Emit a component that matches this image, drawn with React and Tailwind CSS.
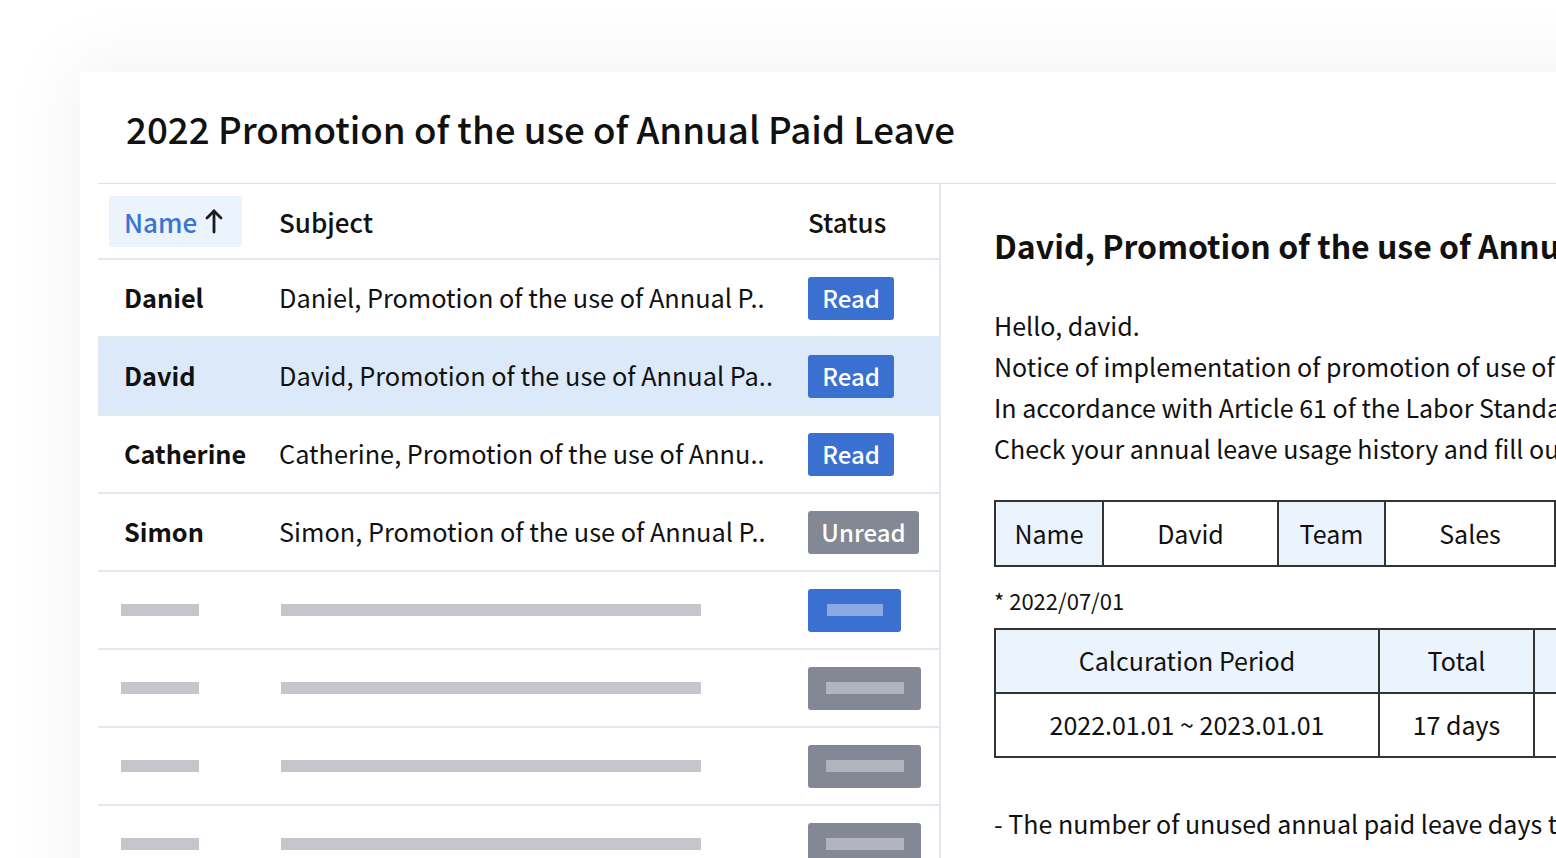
const rows = [
  { name: "Daniel", subject: "Daniel, Promotion of the use of Annual P..", status: "Read" },
  { name: "David", subject: "David, Promotion of the use of Annual Pa..", status: "Read", active: true },
  { name: "Catherine", subject: "Catherine, Promotion of the use of Annu..", status: "Read" },
  { name: "Simon", subject: "Simon, Promotion of the use of Annual P..", status: "Unread" },
];

const skeletons = ["blue", "gray", "gray", "gray"];

const Badge = ({ status }) =>
  status === "Read" ? (
    <span className="inline-flex h-[43px] w-[86px] items-center justify-center rounded-[3px] bg-[#3a70d0] text-[24px] font-medium text-white">
      Read
    </span>
  ) : (
    <span className="inline-flex h-[43px] w-[111px] items-center justify-center rounded-[3px] bg-[#848794] text-[24px] font-medium text-white">
      Unread
    </span>
  );

const App = () => {
  return (
    <div
      className="h-screen w-full overflow-hidden bg-white pl-[80px] pt-[72px] text-[#111]"
      style={{ fontFamily: '"Noto Sans CJK KR", "Noto Sans", sans-serif' }}
    >
      {/* -------- card -------- */}
      <div className="min-h-[900px] w-[1600px] bg-white pl-[18px] shadow-[0_0_70px_10px_rgba(0,0,0,0.05)]">
        <h1 className="h-[111px] pl-[28px] pt-[33px] text-[36.7px] font-medium leading-[46px]">
          2022 Promotion of the use of Annual Paid Leave
        </h1>

        <div className="flex border-t border-[#dde2ea]">
          {/* -------- list -------- */}
          <div className="w-[843px] shrink-0 border-r-2 border-[#e3e7ee]">
            <div className="flex h-[76px] items-center border-b-2 border-[#e3e7ee] text-[26px] font-medium">
              <div className="w-[181px] pl-[11px]">
                <div className="flex h-[51px] w-[133px] items-center gap-[8px] rounded-[3px] bg-[#ebf3fd] pl-[15px] text-[#3b73d1]">
                  Name
                  <svg width="18" height="26" viewBox="0 0 18 26" fill="none" stroke="#1a1a1a" strokeWidth="2.8" strokeLinecap="round" strokeLinejoin="round">
                    <path d="M9 24V3" />
                    <path d="M2 10l7-7 7 7" />
                  </svg>
                </div>
              </div>
              <div className="w-[529px]">Subject</div>
              <div>Status</div>
            </div>

            {rows.map((row, index) => (
              <div
                key={index}
                className={`flex h-[78px] items-center border-b-2 border-[#e3e7ee] text-[25.3px] ${
                  row.active ? "bg-[#dce9f9]" : ""
                }`}
              >
                <div className="w-[181px] pl-[26px] font-semibold">{row.name}</div>
                <div className="w-[529px] whitespace-nowrap">{row.subject}</div>
                <div>
                  <Badge status={row.status} />
                </div>
              </div>
            ))}

            {skeletons.map((kind, index) => (
              <div key={index} className="flex h-[78px] items-center border-b-2 border-[#e3e7ee]">
                <div className="w-[183px] pl-[23px]">
                  <div className="h-[12px] w-[78px] bg-[#c5c6cb]"></div>
                </div>
                <div className="w-[527px]">
                  <div className="h-[12px] w-[420px] bg-[#c5c6cb]"></div>
                </div>
                {kind === "blue" ? (
                  <div className="flex h-[43px] w-[93px] items-center justify-center rounded-[3px] bg-[#3a70d0]">
                    <div className="h-[12px] w-[56px] bg-[#8aaae3]"></div>
                  </div>
                ) : (
                  <div className="flex h-[43px] w-[113px] items-center justify-center rounded-[3px] bg-[#848794]">
                    <div className="h-[12px] w-[78px] bg-[#b1b3bd]"></div>
                  </div>
                )}
              </div>
            ))}
          </div>

          {/* -------- detail -------- */}
          <div className="flex-1 whitespace-nowrap pl-[53px] pt-[39px]">
            <h2 className="text-[32px] font-bold leading-[44px]">
              David, Promotion of the use of Annual Paid Leave
            </h2>

            <div className="mt-[38px] text-[25px] leading-[41px]">
              <p>Hello, david.</p>
              <p>Notice of implementation of promotion of use of annual paid leave in 2022.</p>
              <p>In accordance with Article 61 of the Labor Standards Act, we notify you as follows.</p>
              <p>Check your annual leave usage history and fill out the plan below.</p>
            </div>

            <table className="mt-[31px] border-collapse border-2 border-[#333] text-[25px]">
              <tbody>
                <tr className="h-[65px]">
                  <td className="w-[108px] border-2 border-[#333] bg-[#ebf3fd] text-center">Name</td>
                  <td className="w-[175px] border-2 border-[#333] text-center">David</td>
                  <td className="w-[107px] border-2 border-[#333] bg-[#ebf3fd] text-center">Team</td>
                  <td className="w-[170px] border-2 border-[#333] text-center">Sales</td>
                  <td className="w-[107px] border-2 border-[#333] bg-[#ebf3fd] text-center">Position</td>
                </tr>
              </tbody>
            </table>

            <p className="mt-[18px] text-[22px] leading-[30px]">* 2022/07/01</p>

            <table className="mt-[13px] border-collapse border-2 border-[#333] text-[25px]">
              <tbody>
                <tr className="h-[64px] bg-[#ebf3fd]">
                  <td className="w-[384px] border-2 border-[#333] text-center">Calcuration Period</td>
                  <td className="w-[155px] border-2 border-[#333] text-center">Total</td>
                  <td className="w-[155px] border-2 border-[#333] text-center">Used</td>
                </tr>
                <tr className="h-[64px]">
                  <td className="border-2 border-[#333] text-center">2022.01.01 ~ 2023.01.01</td>
                  <td className="border-2 border-[#333] text-center">17 days</td>
                  <td className="border-2 border-[#333] text-center">5 days</td>
                </tr>
              </tbody>
            </table>

            <p className="mt-[45px] text-[25px] leading-[41px]">
              - The number of unused annual paid leave days that remain as of today is 12 days.
            </p>
          </div>
        </div>
      </div>
    </div>
  );
};

export default App;
